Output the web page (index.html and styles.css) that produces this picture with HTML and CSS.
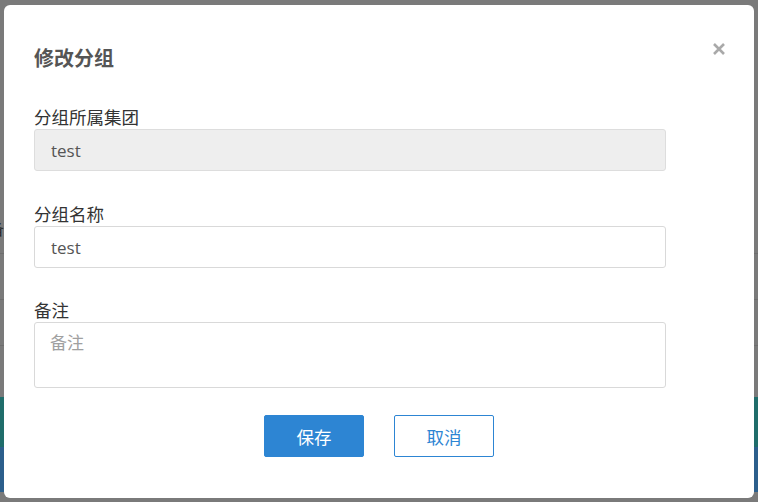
FILE: index.html
```html
<!DOCTYPE html>
<html lang="zh">
<head>
<meta charset="utf-8">
<title>修改分组</title>
<link rel="stylesheet" href="styles.css">
</head>
<body>
<div class="backdrop">
  <div class="bg-spacer"></div>
  <div class="bg-row bg-row-text"><span class="bg-char">备</span></div>
  <div class="bg-row"></div>
  <div class="bg-row"></div>
  <div class="bg-gap"></div>
  <div class="bg-band teal"></div>
  <div class="bg-band blue"></div>
</div>
<div class="modal">
  <button class="close" aria-label="关闭">
    <svg width="14" height="14" viewBox="0 0 14 14"><path d="M2 2 L12 12 M12 2 L2 12" stroke="#a9a9a9" stroke-width="2.6" stroke-linecap="butt"/></svg>
  </button>
  <h2 class="title">修改分组</h2>
  <form class="form">
    <div class="field">
      <label class="label">分组所属集团</label>
      <input class="input disabled" value="test" disabled>
    </div>
    <div class="field">
      <label class="label">分组名称</label>
      <input class="input" value="test">
    </div>
    <div class="field">
      <label class="label">备注</label>
      <textarea class="input textarea" placeholder="备注"></textarea>
    </div>
    <div class="actions">
      <button type="button" class="btn primary">保存</button>
      <button type="button" class="btn ghost">取消</button>
    </div>
  </form>
</div>
</body>
</html>
```
FILE: styles.css
```css
* { box-sizing: border-box; }
html, body { margin: 0; padding: 0; }
body {
  width: 758px;
  height: 502px;
  overflow: hidden;
  background: #7a7a7a;
  font-family: "Open Sans", "Noto Sans CJK SC", sans-serif;
  position: relative;
}
.backdrop {
  height: 502px;
  display: flex;
  flex-direction: column;
}
.bg-spacer { height: 208px; }
.bg-row {
  height: 46px;
  border-bottom: 1px solid #6e6e6e;
}
.bg-row-text { position: relative; }
.bg-char {
  position: absolute;
  left: -12px;
  top: 8px;
  font-size: 16px;
  color: #2a2a2a;
}
.bg-gap { height: 51px; }
.bg-band.teal { height: 50px; background: #1f6d6b; }
.bg-band.blue { height: 45px; background: #2c5f8c; }

.modal {
  position: absolute;
  left: 4px;
  top: 5px;
  width: 750px;
  height: 493px;
  background: #fff;
  border-radius: 6px;
  padding: 42px 30px 0 30px;
}
.close {
  position: absolute;
  right: 28px;
  top: 37px;
  width: 14px;
  height: 14px;
  padding: 0;
  border: 0;
  background: none;
  display: flex;
}
.title {
  margin: 0;
  font-size: 20px;
  line-height: 24px;
  font-weight: bold;
  color: #555;
}
.form {
  width: 632px;
  margin-top: 35px;
  display: flex;
  flex-direction: column;
}
.field {
  display: flex;
  flex-direction: column;
  margin-bottom: 32px;
}
.field:nth-child(2) { margin-bottom: 31px; }
.field:nth-child(3) { margin-bottom: 27px; }
.label {
  font-size: 17.5px;
  line-height: 22px;
  color: #333;
  margin-bottom: 1px;
}
.input {
  height: 42px;
  width: 632px;
  border: 1px solid #d9d9d9;
  border-radius: 3px;
  padding: 0 16px;
  font-family: "Open Sans", "Noto Sans CJK SC", sans-serif;
  font-size: 17px;
  color: #555;
  background: #fff;
  outline: none;
}
.input.disabled { background: #eee; color: #555; border-color: #ddd; -webkit-text-fill-color: #555; opacity: 1; }
.textarea {
  height: 66px;
  padding: 9px 15px;
  resize: none;
  line-height: 22px;
}
.textarea::placeholder { color: #a0a0a0; }
.actions {
  display: flex;
  justify-content: center;
  gap: 30px;
  width: 690px;
}
.btn {
  width: 100px;
  height: 42px;
  border-radius: 2px;
  font-family: "Open Sans", "Noto Sans CJK SC", sans-serif;
  font-size: 17.5px;
  cursor: pointer;
}
.btn.primary {
  background: #2d85d3;
  border: 1px solid #2d85d3;
  color: #fff;
}
.btn.ghost {
  background: #fff;
  border: 1px solid #2d85d3;
  color: #2d85d3;
}
```
